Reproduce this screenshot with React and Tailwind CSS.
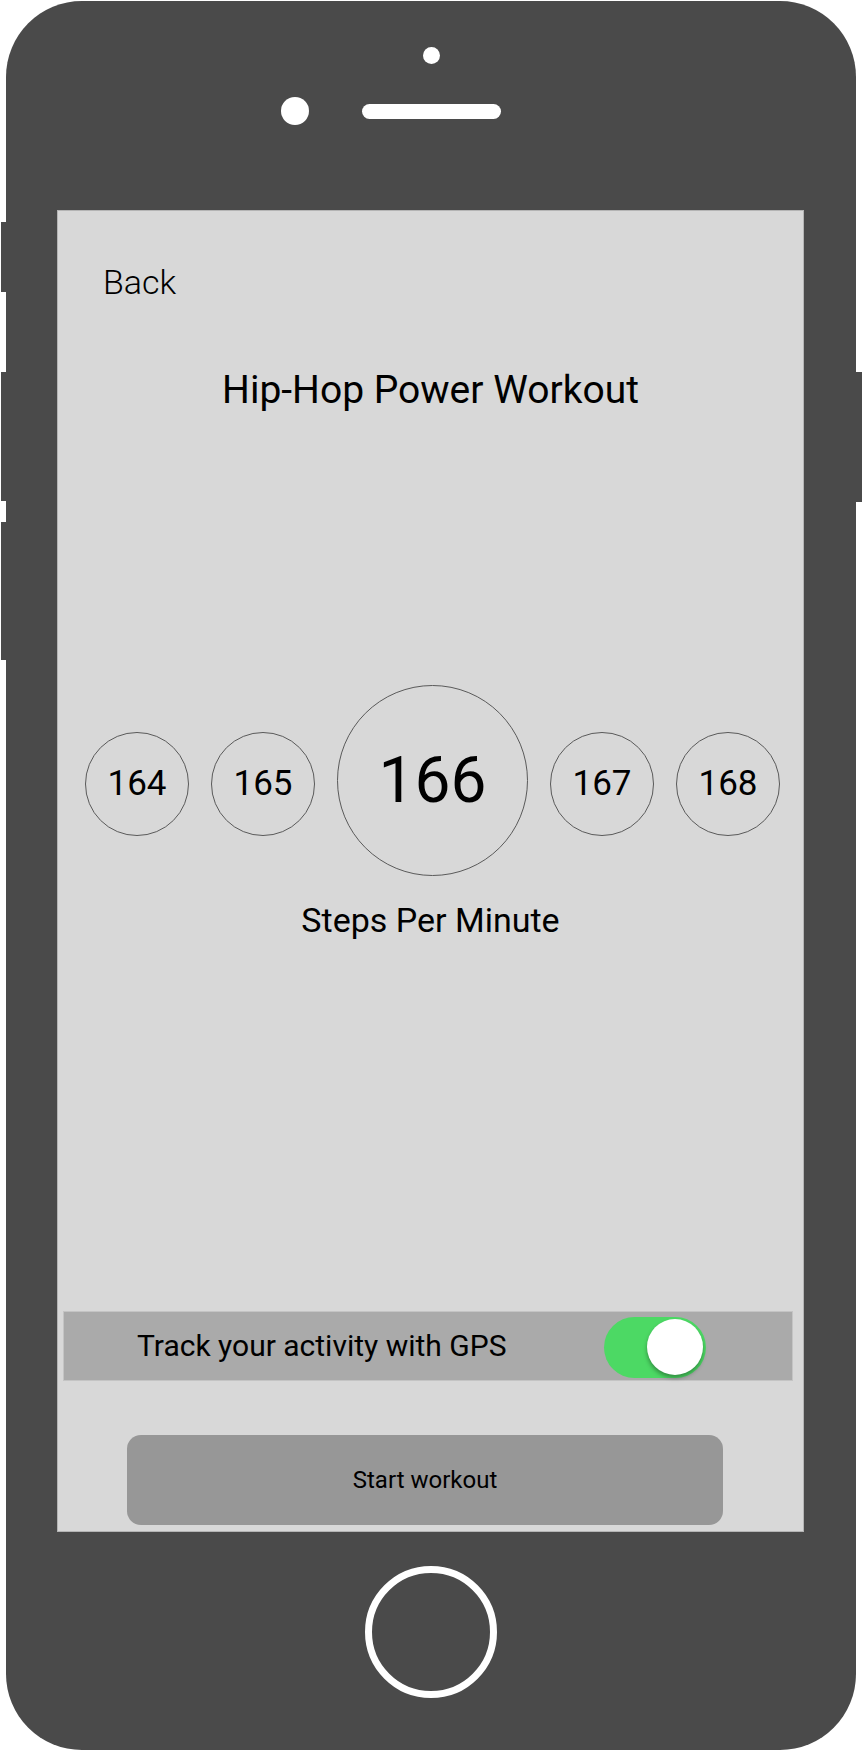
import React from "react";

const FONT = { fontFamily: "Roboto, 'Noto Sans', sans-serif" };

const StepCircle = ({ value }) => (
  <div className="w-[104px] h-[104px] rounded-full border border-[#5a5a5a] flex items-center justify-center translate-y-[3px]">
    <span className="text-[35px] font-normal leading-none text-black">{value}</span>
  </div>
);

const App = () => {
  return (
    <div className="relative w-[862px] h-[1752px] bg-white pl-[6px] pt-[1px]" style={FONT}>
      {/* side buttons */}
      <div className="absolute left-[1px] top-[222px] w-[6px] h-[70px] bg-[#4a4a4a]" />
      <div className="absolute left-[1px] top-[372px] w-[6px] h-[129px] bg-[#4a4a4a]" />
      <div className="absolute left-[1px] top-[522px] w-[6px] h-[138px] bg-[#4a4a4a]" />
      <div className="absolute right-0 top-[372px] w-[7px] h-[130px] bg-[#4a4a4a]" />

      {/* Phone body */}
      <div className="w-[850px] h-[1749px] rounded-[76px] bg-[#4a4a4a] flex flex-col items-center">
        {/* Top sensors */}
        <div className="h-[209px] w-full flex flex-col items-center">
          <div className="mt-[46px] w-[17px] h-[17px] rounded-full bg-white" />
          <div className="mt-[33px] self-start ml-[275px] flex items-center gap-[53px]">
            <div className="w-[28px] h-[28px] rounded-full bg-white" />
            <div className="w-[139px] h-[15px] rounded-full bg-white" />
          </div>
        </div>

        {/* Screen */}
        <div className="self-start ml-[51px] w-[747px] h-[1322px] bg-[#d8d8d8] shadow-[inset_0_0_0_1px_#b4b4b4] flex flex-col">
          <div className="mt-[55px] ml-[46px] text-[34px] font-light leading-none text-black">Back</div>

          <h1 className="mt-[72px] text-center text-[39px] font-normal leading-none text-black">
            Hip-Hop Power Workout
          </h1>

          <div className="mt-[275px] pl-[28px] flex items-center gap-[22px]">
            <StepCircle value={164} />
            <StepCircle value={165} />
            <div className="w-[191px] h-[191px] rounded-full border border-[#5a5a5a] flex items-center justify-center">
              <span className="text-[64px] font-normal leading-none text-black">166</span>
            </div>
            <StepCircle value={167} />
            <StepCircle value={168} />
          </div>

          <div className="mt-[27px] text-center text-[34px] font-normal leading-none text-black">Steps Per Minute</div>

          <div className="mt-[374px] ml-[6px] w-[730px] h-[70px] bg-[#aaaaaa] border border-[#c4c4c4] flex items-center justify-between pl-[73px] pr-[86px]">
            <span className="text-[30px] leading-none text-black">Track your activity with GPS</span>
            <div className="w-[102px] h-[61px] rounded-full bg-[#4cd964] flex items-center justify-end pr-[3px] mt-[2px]">
              <div className="w-[56px] h-[56px] rounded-full bg-white shadow-[0_3px_4px_rgba(0,0,0,0.35)]" />
            </div>
          </div>

          <button className="mt-[54px] ml-[70px] w-[596px] h-[90px] rounded-[14px] bg-[#979797] flex items-center justify-center">
            <span className="text-[24px] leading-none text-black">Start workout</span>
          </button>
        </div>

        {/* Home button */}
        <div className="mt-[34px] w-[132px] h-[132px] rounded-full border-[7px] border-white" />
      </div>
    </div>
  );
};

export default App;
